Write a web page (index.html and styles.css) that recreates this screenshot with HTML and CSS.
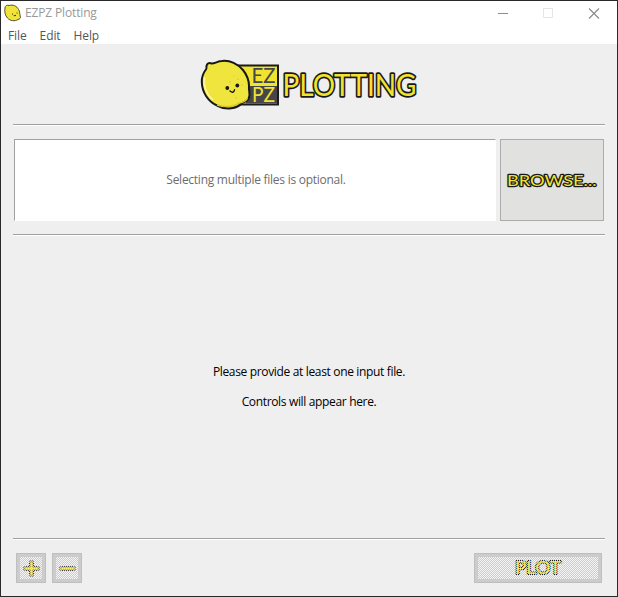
FILE: index.html
```html
<!DOCTYPE html>
<html lang="en">
<head>
<meta charset="utf-8">
<title>EZPZ Plotting</title>
<link rel="stylesheet" href="styles.css">
</head>
<body>
<div class="window">
  <header class="titlebar">
    <svg class="app-icon" width="18" height="18" viewBox="0 0 18 18">
      <path d="M1 4C1 1.500 3 .8 5 1.500C9 .3 13 2 14.500 5.500C16 7.500 15.500 9.500 16.200 12C17 14 16 15 14 15.500C11 17.500 6 17 3.500 14C1 11.500 .4 7.500 1 4Z" fill="#f0e43b" stroke="#53502b"/>
      <path d="M8.500 9.500v1M13 8.500v1M9.700 11.500q1.500 1 2.300-.5" fill="none" stroke="#332f18"/>
    </svg>
    <span class="title">EZPZ Plotting</span>
    <svg class="controls" width="120" height="20" viewBox="0 0 120 20" fill="none">
      <path d="M2 10.500h10" stroke="#8d8d8d"/>
      <path d="M47.500 5.500h9v9h-9z" stroke="#e5e5e5"/>
      <path d="M93 5.500l10 10M103 5.500l-10 10" stroke="#8a8a8a" stroke-width="1.100"/>
    </svg>
  </header>
  <nav class="menu"><span class="file">File</span><span class="edit">Edit</span><span class="help">Help</span></nav>
  <main class="content">
    <div class="brand">
      <svg width="220" height="54" viewBox="200 58 220 54">
        <path d="M235 65.500h43v39h-43z" fill="#f0e32f" stroke="#1b1b1b" stroke-width="2"/>
        <path d="M246 86h31v17.500h-31z" fill="#46464a"/>
        <text class="ez" x="251.500" y="82.500" textLength="24" lengthAdjust="spacingAndGlyphs" fill="#46464a">EZ</text>
        <text class="ez" x="252" y="101.500" textLength="23" lengthAdjust="spacingAndGlyphs" fill="#f0e32f">PZ</text>
        <path d="M206.500 66C207 63.500 209 62.500 211.500 63.500C215.500 63.500 217.500 61 222 61C230 60 238 64 243 70C247 75 249 81 249 86C248.500 91 250.500 93 249 97.500C248 101.500 245 101.500 242 103C237 109 226 110 218 106C208 102 202 92 201.800 82C201.500 76 204 72 206.200 69C206.800 68 206.300 67 206.500 66Z" fill="#f0e53c" stroke="#171717" stroke-width="2"/>
        <path d="M204.500 77Q202.500 91 213 100" fill="none" stroke="#fff6a8" stroke-width="1.500"/>
        <path d="M217 105Q230 109 239 103Q246 102 247.500 98" fill="none" stroke="#d9c32e" stroke-width="1.500"/>
        <g fill="#d6c431"><circle cx="230" cy="82" r=".7"/><circle cx="238" cy="79" r=".8"/><circle cx="242" cy="85" r=".7"/><circle cx="234" cy="76" r=".6"/><circle cx="236" cy="98" r=".7"/></g>
        <circle cx="227.300" cy="88" r="1.900" fill="#171717"/><circle cx="237.300" cy="85.500" r="1.900" fill="#171717"/>
        <path d="M230 91Q233.500 94 234.500 89.800" fill="none" stroke="#171717" stroke-width="1.400" stroke-linecap="round"/>
        <text class="outline logo-text" x="282.500" y="95.500" textLength="134" lengthAdjust="spacingAndGlyphs">PLOTTING</text>
      </svg>
    </div>
    <div class="rule"></div>
    <div class="files">
      <div class="filebox"><span class="hint">Selecting multiple files is optional.</span></div>
      <button class="browse"><svg width="96" height="24" viewBox="504 168 96 24"><text class="outline browse-text" x="507" y="186" textLength="89.500" lengthAdjust="spacingAndGlyphs">BROWSE...</text></svg></button>
    </div>
    <div class="rule"></div>
    <section class="empty"><p class="line-one">Please provide at least one input file.</p><p class="line-two">Controls will appear here.</p></section>
    <div class="rule"></div>
    <footer class="actions">
      <button class="disabled small"><svg width="22" height="22"><defs><pattern id="dither" width="2" height="2" patternUnits="userSpaceOnUse"><path d="M0 0h1v1H0zM1 1h1v1H1z" fill="#ccc" shape-rendering="crispEdges"/></pattern></defs><path d="M11.500 5.500v12M5.500 11.500h12" class="bar-edge"/><path d="M11.500 5.500v12M5.500 11.500h12" class="bar"/><rect width="22" height="22" fill="url(#dither)"/></svg></button>
      <button class="disabled small"><svg width="22" height="22"><path d="M5.500 11.500h12" class="bar-edge"/><path d="M5.500 11.500h12" class="bar"/><rect width="22" height="22" fill="url(#dither)"/></svg></button>
      <button class="disabled plot"><svg width="120" height="22"><text class="outline plot-text" x="37" y="17" textLength="46" lengthAdjust="spacingAndGlyphs">PLOT</text><rect width="120" height="22" fill="url(#dither)"/></svg></button>
    </footer>
  </main>
</div>
</body>
</html>
```
FILE: styles.css
```css
* { box-sizing: border-box; }
body { margin: 0; font: 12px/16px "Open Sans", "Noto Sans", sans-serif; }
svg { display: block; }
.window { width: 618px; height: 597px; border: 1px solid #29282a; background: #fff; display: flex; flex-direction: column; }
.titlebar { height: 25px; display: flex; align-items: center; padding: 0 1px 1px 3px; flex: none; }
.title { color: #999; margin-left: 3px; letter-spacing: -.15px; }
.controls { margin-left: auto; width: 120px; }
.menu { height: 18px; display: flex; padding: 2px 7px 0; gap: 13px; color: #555; flex: none; letter-spacing: -.1px; }
.content { background: #efefef; flex: 1; padding: 0 12px; display: flex; flex-direction: column; }
.brand { height: 80px; display: flex; padding: 14px 0 0 187px; flex: none; }
.rule { height: 2px; flex: none; background: #fff; border-top: 1px solid #a0a0a0; }
.files { height: 108px; display: flex; gap: 4px; padding: 13px 1px; flex: none; }
.filebox { width: 482px; height: 82px; border: 1px solid #fff; border-top-color: #a0a0a0; border-left-color: #a0a0a0; background: #fff; display: flex; align-items: center; justify-content: center; color: #6d6d6d; }
.hint { letter-spacing: -.26px; margin-left: 2px; }
button { padding: 0; margin: 0; border-radius: 0; display: flex; align-items: center; justify-content: center; }
.browse { width: 104px; height: 82px; border: 1px solid #adadad; background: #e1e1df; }
.empty { height: 302px; flex: none; display: flex; flex-direction: column; align-items: center; justify-content: center; gap: 14px; color: #000; }
.empty p { margin: 0; letter-spacing: -.34px; }
.actions { display: flex; gap: 6px; padding: 13px 3px 0; }
.disabled { height: 30px; border: 1px solid #bfbfbf; background: #ccc; }
.disabled svg { background: #f5f5f5; }
.small { width: 30px; }
.plot { width: 128px; margin-left: auto; }
.outline { fill: #f2e32d; stroke: #171717; stroke-linejoin: round; paint-order: stroke; font-family: Lato, sans-serif; font-weight: 400; opacity: .99; }
.ez { font: 21px Lato, sans-serif; }
.logo-text { font-size: 30px; stroke-width: 3.500px; }
.browse-text { font-size: 16px; stroke-width: 2.500px; }
.plot-text { font-size: 18px; stroke-width: 2.200px; fill: #fff06a; }
.bar-edge { fill: none; stroke: #111; stroke-width: 4.600; stroke-linecap: round; }
.bar { fill: none; stroke: #fff06a; stroke-width: 2.400; stroke-linecap: round; }
```
